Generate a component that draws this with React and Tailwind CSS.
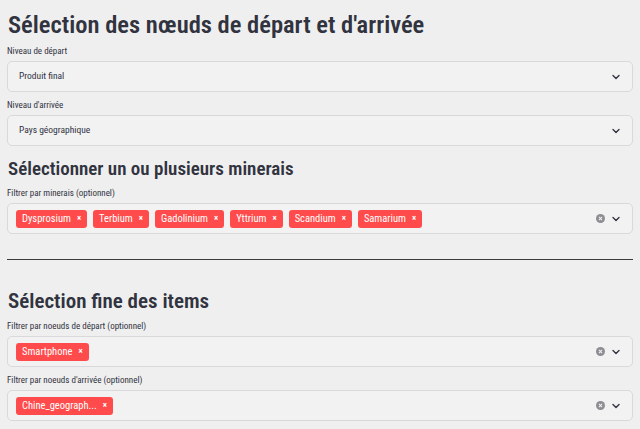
import { ChevronDown } from "lucide-react";

const minerals = ["Dysprosium", "Terbium", "Gadolinium", "Yttrium", "Scandium", "Samarium"];

const Chevron = () => (
  <ChevronDown className="w-3 h-3 text-[#31333f]" strokeWidth={2.75} />
);

const ClearIcon = () => (
  <svg viewBox="0 0 10 10" className="w-[9px] h-[9px]">
    <circle cx="5" cy="5" r="5" fill="#8d8d92" />
    <path d="M3.3 3.3 L6.7 6.7 M6.7 3.3 L3.3 6.7" stroke="#f2f2f3" strokeWidth="1.2" />
  </svg>
);

const Label = ({ children }) => (
  <p className="text-[9px] leading-[14px] text-[#31333f] mb-[3px]">{children}</p>
);

const Select = ({ value }) => (
  <div className="flex items-center justify-between h-[31px] bg-[#f2f2f3] border border-[#d9d9db] rounded-[5px] pl-[11px] pr-[10px]">
    <span className="text-[9.5px] text-[#31333f]">{value}</span>
    <Chevron />
  </div>
);

const Tag = ({ label }) => (
  <span className="flex items-center h-[18px] pl-[6px] pr-[6px] gap-[6px] bg-[#ff4b4b] text-white text-[10.5px] rounded-[3px]">
    {label}
    <span className="text-[9px] leading-none font-bold">×</span>
  </span>
);

const MultiSelect = ({ tags }) => (
  <div className="flex items-center justify-between h-[31px] bg-[#f2f2f3] border border-[#d9d9db] rounded-[5px] pl-[8px] pr-[10px]">
    <div className="flex items-center gap-[6px]">
      {tags.map((t) => (
        <Tag key={t} label={t} />
      ))}
    </div>
    <div className="flex items-center gap-[5px]">
      <ClearIcon />
      <Chevron />
    </div>
  </div>
);

const App = () => {
  return (
    <div className="w-[640px] h-[429px] overflow-hidden bg-[#efefef] px-[7px] pt-[9px] text-[#31333f] font-['Roboto_Condensed','Open_Sans',sans-serif]">
      <h1 className="text-[24.5px] font-semibold leading-[32px] ml-[1px] mb-[3px]">
        Sélection des nœuds de départ et d'arrivée
      </h1>
      <Label>Niveau de départ</Label>
      <Select value="Produit final" />
      <div className="h-[6px]" />
      <Label>Niveau d'arrivée</Label>
      <Select value="Pays géographique" />

      <h2 className="text-[19px] font-semibold leading-[24px] ml-[1px] mt-[11px] mb-[5px]">
        Sélectionner un ou plusieurs minerais
      </h2>
      <Label>Filtrer par minerais (optionnel)</Label>
      <MultiSelect tags={minerals} />

      <hr className="border-t border-[#3d3d3d] mt-[25px]" />

      <h2 className="text-[21px] font-semibold leading-[30px] ml-[1px] mt-[26px] mb-[3px]">
        Sélection fine des items
      </h2>
      <Label>Filtrer par noeuds de départ (optionnel)</Label>
      <MultiSelect tags={["Smartphone"]} />
      <div className="h-[6px]" />
      <Label>Filtrer par noeuds d'arrivée (optionnel)</Label>
      <MultiSelect tags={["Chine_geograph..."]} />
    </div>
  );
};

export default App;
